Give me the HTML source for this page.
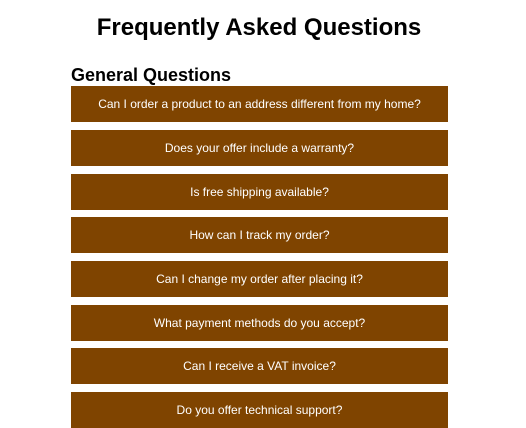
<!DOCTYPE html>
<html><head><style>
body{margin:0;background:#fff;font-family:"Liberation Sans",Arial,sans-serif;width:526px;height:427px;overflow:hidden}
h1{position:absolute;left:0;width:518px;top:14px;margin:0;text-align:center;font-size:24px;font-weight:bold;color:#000}
h2{position:absolute;left:71px;top:65px;margin:0;font-size:18px;font-weight:bold;color:#000}
.q{position:absolute;left:71px;width:377px;height:36px;background:#7f4400;color:#fff;font-size:12px;line-height:36px;text-align:center}
</style></head><body>
<h1>Frequently Asked Questions</h1>
<h2>General Questions</h2>
<div class="q" style="top:86px">Can I order a product to an address different from my home?</div>
<div class="q" style="top:130px">Does your offer include a warranty?</div>
<div class="q" style="top:174px">Is free shipping available?</div>
<div class="q" style="top:217px">How can I track my order?</div>
<div class="q" style="top:261px">Can I change my order after placing it?</div>
<div class="q" style="top:305px">What payment methods do you accept?</div>
<div class="q" style="top:348px">Can I receive a VAT invoice?</div>
<div class="q" style="top:392px">Do you offer technical support?</div>
</body></html>
